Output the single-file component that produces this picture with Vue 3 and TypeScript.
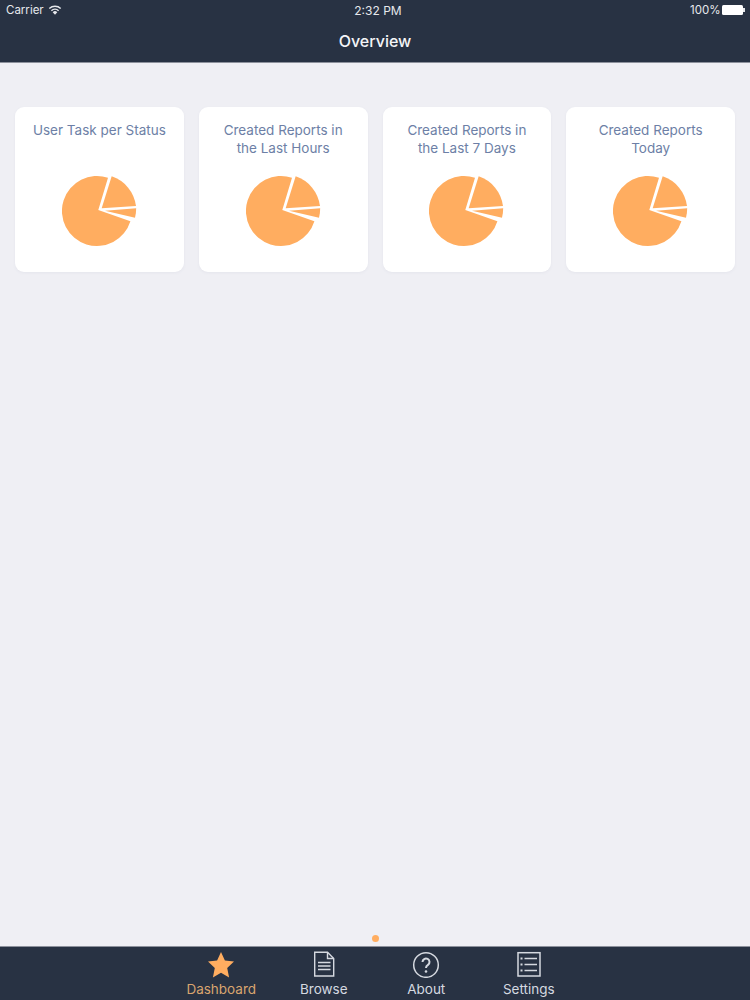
<template>
  <div class="screen">
    <header class="top">
      <div class="status">
        <div class="carrier">
          <span>Carrier</span>
          <svg class="wifi" width="14" height="10" viewBox="0 0 14 10">
            <path d="M7 9.800 4.700 7.200a3.200 3.200 0 0 1 4.600 0Z" fill="currentColor" />
            <path d="M3.400 5.700a5.300 5.300 0 0 1 7.200 0M1.300 3.500a8.400 8.400 0 0 1 11.400 0" fill="none" stroke="currentColor" stroke-width="1.500" />
          </svg>
        </div>
        <div class="clock">2:32 PM</div>
        <div class="battery">
          <span>100%</span>
          <i class="cell"></i><i class="nub"></i>
        </div>
      </div>
      <div class="title">Overview</div>
    </header>

    <main class="content">
      <div class="cards">
        <section v-for="card in cards" :key="card" class="card">
          <h3>{{ card }}</h3>
          <svg class="pie" width="76" height="72" viewBox="0 0 76 72">
            <path d="M36.300 34 L46 1.800 A35 35 0 1 0 68.400 45.300 Z" fill="#ffad60" />
            <path d="M39.700 32.300 L49.700 0.300 A36 36 0 0 1 74 30 Z" fill="#ffad60" />
            <path d="M43 34.700 L74.200 32.300 A36 36 0 0 1 73 41.700 Z" fill="#ffad60" />
          </svg>
        </section>
      </div>
      <i class="page-dot"></i>
    </main>

    <nav class="tabs">
      <div class="tab active">
        <svg width="28" height="28" viewBox="0 0 28 28">
          <path d="M14 2 17.900 10.600 27 11.600 20.200 18 22.100 27.500 14 22.700 5.900 27.500 7.800 18 1 11.600 10.100 10.600Z" fill="#ffad60" />
        </svg>
        <span>Dashboard</span>
      </div>
      <div class="tab">
        <svg width="28" height="28" viewBox="0 0 28 28" fill="none" stroke="currentColor">
          <path d="M4.700 2.200H17.500L23.700 8.500V26H4.700Z" stroke-width="1.400" />
          <path d="M17.500 2.200V8.500H23.700" stroke-width="1.400" />
          <path d="M8 12.500H20.500M8 16H20.500M8 19.500H20.500" stroke-width="1.600" />
        </svg>
        <span>Browse</span>
      </div>
      <div class="tab">
        <svg width="28" height="28" viewBox="0 0 28 28" fill="none" stroke="currentColor">
          <circle cx="14" cy="15" r="12.300" stroke-width="1.500" />
          <path d="M10.500 12a3.500 3.500 0 1 1 5.500 2.900c-1.300.9-2 1.500-2 3.100" stroke-width="2" />
          <circle cx="14" cy="21.500" r="1.300" fill="currentColor" stroke="none" />
        </svg>
        <span>About</span>
      </div>
      <div class="tab">
        <svg width="28" height="28" viewBox="0 0 28 28" fill="none" stroke="currentColor">
          <rect x="3" y="2.700" width="22" height="23.300" stroke-width="1.500" />
          <path d="M9.500 8.500H22M9.500 14.500H22M9.500 20.500H22" stroke-width="1.600" />
          <path d="M5.500 8.500H7.500M5.500 14.500H7.500M5.500 20.500H7.500" stroke-width="2" />
        </svg>
        <span>Settings</span>
      </div>
    </nav>
  </div>
</template>

<script setup lang="ts">
const cards: string[] = [
  'User Task per Status',
  'Created Reports in the Last Hours',
  'Created Reports in the Last 7 Days',
  'Created Reports Today',
]
</script>

<style scoped>
.screen {
  width: 750px;
  height: 1000px;
  display: flex;
  flex-direction: column;
  background: #efeff4;
  font-family: Inter, "Liberation Sans", sans-serif;
  overflow: hidden;
}

.top {
  height: 63px;
  box-sizing: border-box;
  background: #283243;
  border-bottom: 1px solid #8d919c;
  color: #fff;
}

.status {
  height: 20px;
  padding: 0 0 0 6px;
  display: flex;
  align-items: center;
  justify-content: space-between;
  font-size: 11.500px;
  color: #e6e8ec;
}

.carrier,
.battery {
  width: 140px;
  display: flex;
  align-items: center;
}

.carrier {
  gap: 4px;
}

.battery {
  justify-content: flex-end;
  padding-right: 5px;
  box-sizing: border-box;
}

.battery span {
  margin-right: 2px;
}

.clock {
  font-size: 12px;
}

.cell {
  width: 21px;
  height: 10px;
  background: #fff;
  border-radius: 1.500px;
}

.nub {
  width: 1.500px;
  height: 4px;
  background: #e6e8ec;
}

.title {
  text-align: center;
  font-size: 16px;
  font-weight: 500;
  line-height: 22px;
  margin-top: 10px;
  color: #f4f5f7;
}

.content {
  flex: 1;
  position: relative;
  padding: 44px 15px 0;
}

.cards {
  display: grid;
  grid-template-columns: repeat(4, 1fr);
  gap: 15px;
}

.card {
  height: 165px;
  background: #fff;
  border-radius: 9px;
  display: flex;
  flex-direction: column;
  align-items: center;
  box-shadow: 0 1px 3px rgba(120, 125, 150, 0.08);
}

.card h3 {
  margin: 14px 17px 0;
  height: 38px;
  font-size: 13.500px;
  font-weight: 400;
  line-height: 18px;
  text-align: center;
  color: #6d7fa6;
}

.pie {
  margin: 17px 0 0 1px;
}

.page-dot {
  position: absolute;
  left: 371.500px;
  bottom: 4px;
  width: 7px;
  height: 7px;
  border-radius: 50%;
  background: #ffad60;
}

.tabs {
  height: 54px;
  box-sizing: border-box;
  background: #283243;
  border-top: 1px solid #8d919c;
  display: flex;
  justify-content: center;
  color: #d5d9e0;
}

.tab {
  width: 102.500px;
  display: flex;
  flex-direction: column;
  align-items: center;
  padding-top: 3px;
  font-size: 13.500px;
  line-height: 16px;
  gap: 3px;
  box-sizing: border-box;
}

.tab.active {
  color: #d9a56f;
}
</style>
